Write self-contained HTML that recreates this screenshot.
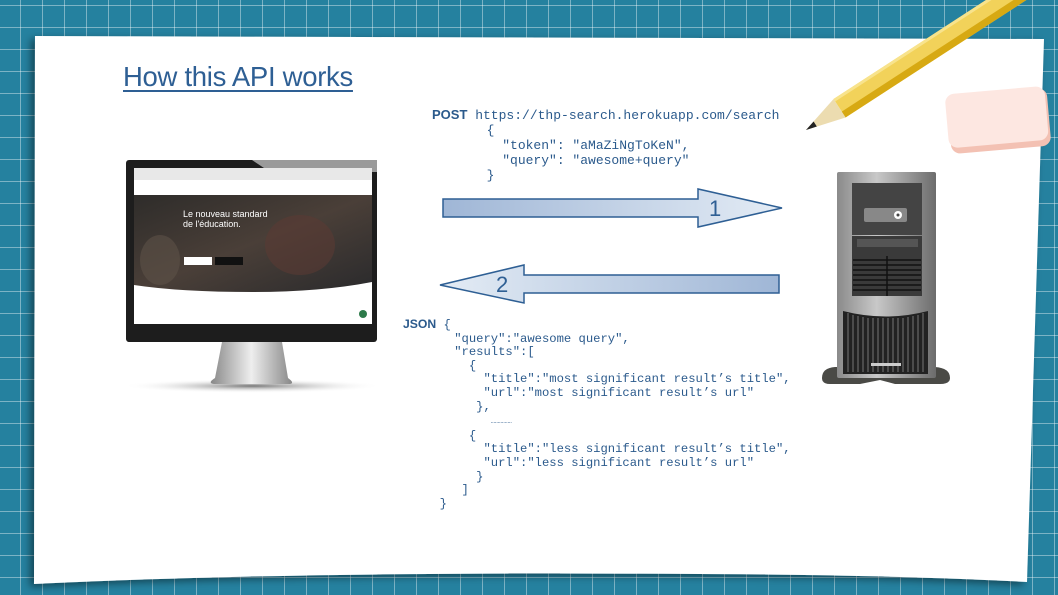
<!DOCTYPE html>
<html><head><meta charset="utf-8"><style>
html,body{margin:0;padding:0}
body{width:1058px;height:595px;overflow:hidden;position:relative;font-family:"Liberation Sans",sans-serif;
background-color:#25819f;
background-image:
linear-gradient(90deg,rgba(255,255,255,.4) 1px,transparent 1px),
linear-gradient(0deg,rgba(255,255,255,.4) 1px,transparent 1px);
background-size:22px 22px;background-position:20px 6px;}
.abs{position:absolute}
h1{position:absolute;left:123px;top:61px;margin:0;font-weight:normal;font-size:27.5px;color:#2e5f94;text-decoration:underline;text-decoration-thickness:2px;text-underline-offset:4px;letter-spacing:-0.3px}
pre{position:absolute;margin:0;font-family:"Liberation Mono",monospace;font-size:12.5px;color:#2b5a8c;line-height:15px}
pre b{font-family:"Liberation Sans",sans-serif;font-weight:bold}
</style></head><body>
<svg class="abs" style="left:0;top:0" width="1058" height="595">
<defs>
<linearGradient id="ar1" x1="0" x2="1"><stop offset="0" stop-color="#9fb6d6"/><stop offset="1" stop-color="#e4ecf5"/></linearGradient>
<linearGradient id="ar2" x1="0" x2="1"><stop offset="0" stop-color="#e4ecf5"/><stop offset="1" stop-color="#9fb6d6"/></linearGradient>
<linearGradient id="srv" x1="0" x2="1"><stop offset="0" stop-color="#8a8a8a"/><stop offset=".4" stop-color="#c8c8c8"/><stop offset="1" stop-color="#6c6c6c"/></linearGradient>
<linearGradient id="stand" x1="0" x2="1"><stop offset="0" stop-color="#888"/><stop offset=".5" stop-color="#eee"/><stop offset="1" stop-color="#888"/></linearGradient>
<linearGradient id="scr" x1="0" y1="0" x2="1" y2="1"><stop offset="0" stop-color="#2e2c2a"/><stop offset=".5" stop-color="#4a3f38"/><stop offset="1" stop-color="#2a2a2c"/></linearGradient>
<radialGradient id="sh"><stop offset="0" stop-color="#777"/><stop offset="1" stop-color="#fff" stop-opacity="0"/></radialGradient>
<filter id="ds" x="-5%" y="-5%" width="110%" height="110%"><feDropShadow dx="-4" dy="3" stdDeviation="4" flood-color="#000" flood-opacity=".45"/></filter>
</defs>
<path d="M35 36 L1044 39 L1027 582 Q900 575 700 574 Q300 571 34 584 Z" fill="#fff" filter="url(#ds)"/>
<path d="M443 199 H698 V189 L782 208 L698 227 V217 H443 Z" fill="url(#ar1)" stroke="#2e5f94" stroke-width="1.5"/>
<text x="709" y="216" font-size="22" fill="#2e5f94" font-family="Liberation Sans">1</text>
<path d="M779 275 H524 V265 L440 285 L524 303 V293 H779 Z" fill="url(#ar2)" stroke="#2e5f94" stroke-width="1.5"/>
<text x="496" y="292" font-size="22" fill="#2e5f94" font-family="Liberation Sans">2</text>
<ellipse cx="252" cy="386" rx="130" ry="7" fill="url(#sh)"/>
<path d="M222 342 H282 L288 378 Q295 383 290 384 H214 Q207 383 215 378 Z" fill="url(#stand)"/>
<rect x="126" y="160" width="251" height="182" rx="3" fill="#1d1d1d"/>
<path d="M252 160 H377 V172 H270 Z" fill="#9a9a9a"/>
<rect x="134" y="168" width="238" height="156" fill="#fff"/>
<rect x="134" y="168" width="238" height="12" fill="#e8e8e8"/>
<rect x="134" y="183" width="238" height="10" fill="#fff"/>
<path d="M134 195 H372 V282 Q320 292 253 292 Q180 292 134 285 Z" fill="url(#scr)"/>
<ellipse cx="300" cy="245" rx="35" ry="30" fill="#5a3a33" opacity=".6"/>
<ellipse cx="160" cy="260" rx="20" ry="25" fill="#5d5148" opacity=".6"/>
<text x="183" y="217" font-size="9" fill="#fff">Le nouveau standard</text>
<text x="183" y="227" font-size="9" fill="#fff">de l'éducation.</text>
<rect x="184" y="257" width="28" height="8" fill="#fff"/>
<rect x="215" y="257" width="28" height="8" fill="#111"/>
<circle cx="363" cy="314" r="4" fill="#2d7a4a"/>
<path d="M822 378 Q822 368 835 367 H935 Q950 368 950 378 Q950 384 940 384 H895 L880 380 L860 384 H830 Q822 384 822 378 Z" fill="#4a4a46"/>
<rect x="837" y="172" width="99" height="206" rx="2" fill="url(#srv)"/>
<rect x="852" y="183" width="70" height="52" fill="#444"/>
<rect x="864" y="208" width="43" height="14" rx="2" fill="#888"/>
<circle cx="898" cy="215" r="4" fill="#fff"/><circle cx="898" cy="215" r="1.5" fill="#444"/>
<rect x="852" y="236" width="70" height="60" fill="#3a3a3a"/>
<rect x="857" y="239" width="61" height="8" fill="#555"/>
<g stroke="#111" stroke-width="1.5">
<line x1="853" y1="260" x2="921" y2="260"/><line x1="853" y1="265" x2="921" y2="265"/><line x1="853" y1="270" x2="921" y2="270"/><line x1="853" y1="275" x2="921" y2="275"/><line x1="853" y1="280" x2="921" y2="280"/><line x1="853" y1="285" x2="921" y2="285"/><line x1="853" y1="290" x2="921" y2="290"/>
<line x1="887" y1="256" x2="887" y2="296"/></g>
<path d="M843 311 Q886 322 928 311 V374 H843 Z" fill="#222"/>
<g stroke="#777" stroke-width="1">
<line x1="848" y1="313" x2="848" y2="372"/><line x1="853" y1="315" x2="853" y2="372"/><line x1="858" y1="316" x2="858" y2="372"/><line x1="863" y1="317" x2="863" y2="372"/><line x1="868" y1="318" x2="868" y2="372"/><line x1="873" y1="318" x2="873" y2="372"/><line x1="878" y1="318" x2="878" y2="372"/><line x1="883" y1="318" x2="883" y2="372"/><line x1="888" y1="318" x2="888" y2="372"/><line x1="893" y1="318" x2="893" y2="372"/><line x1="898" y1="318" x2="898" y2="372"/><line x1="903" y1="318" x2="903" y2="372"/><line x1="908" y1="317" x2="908" y2="372"/><line x1="913" y1="316" x2="913" y2="372"/><line x1="918" y1="315" x2="918" y2="372"/><line x1="923" y1="313" x2="923" y2="372"/></g>
<rect x="871" y="363" width="30" height="3" fill="#ccc"/>
<g transform="translate(806,130) rotate(-33)">
<rect x="40" y="-11" width="240" height="22" fill="#f2d25a"/>
<rect x="40" y="4" width="240" height="7" fill="#d7a913"/>
<rect x="40" y="-11" width="240" height="3" fill="#f8e38c"/>
<path d="M0 0 L40 -11 V11 Z" fill="#ecdcb0"/>
<path d="M0 0 L11 -3 V3 Z" fill="#222"/>
</g>
<g transform="rotate(-5 998 120)">
<rect x="949" y="92" width="100" height="58" rx="9" fill="#f3c1b3"/>
<rect x="947" y="90" width="100" height="54" rx="9" fill="#fde7e1"/>
</g>
</svg>
<h1>How this API works</h1>
<pre style="left:432px;top:107px;font-size:13px"><b>POST</b> https://thp-search.herokuapp.com/search
       {
         "token": "aMaZiNgToKeN",
         "query": "awesome+query"
       }</pre>
<pre style="left:403px;top:318px;line-height:13.6px;font-size:12.2px"><b>JSON</b> {
       "query":"awesome query",
       "results":[
         {
           "title":"most significant result’s title",
           "url":"most significant result’s url"
          },
            <span style="font-size:7px">……………</span>
         {
           "title":"less significant result’s title",
           "url":"less significant result’s url"
          }
        ]
     }</pre>
</body></html>
